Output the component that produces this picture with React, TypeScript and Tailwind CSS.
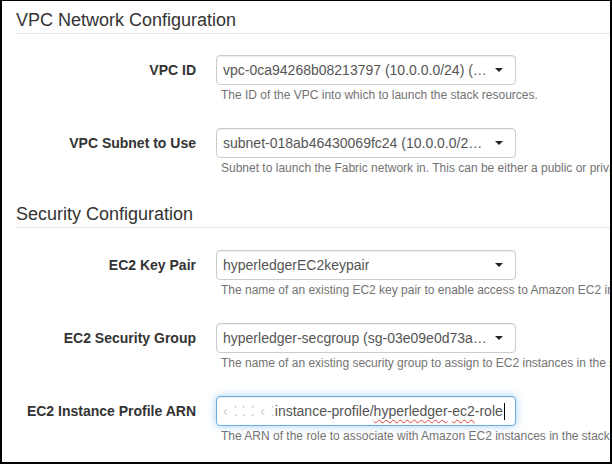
import React from "react";

function Caret() {
  return (
    <span className="w-0 h-0 border-l-[4px] border-r-[4px] border-t-[4px] border-l-transparent border-r-transparent border-t-[#222] shrink-0" />
  );
}

function Select({ value }: { value: string }) {
  return (
    <div className="w-[300px] h-[30px] flex items-center justify-between pl-[6px] pr-[12px] border border-[#ccc] rounded-[4px] bg-white shadow-[inset_0_1px_1px_rgba(0,0,0,0.075)]">
      <span className="text-[14px] leading-[20px] text-[#555] whitespace-nowrap overflow-hidden">{value}</span>
      <Caret />
    </div>
  );
}

function Row({
  label,
  help,
  children,
}: {
  label: string;
  help: string;
  children: React.ReactNode;
}) {
  return (
    <div className="flex">
      <div className="w-[180px] shrink-0 text-right text-[14px] leading-[30px] font-bold text-[#333]">
        {label}
      </div>
      <div className="ml-[20px] flex flex-col">
        {children}
        <div className="mt-[2px] text-[12px] leading-[16px] text-[#737373] whitespace-nowrap pl-[5px]">
          {help}
        </div>
      </div>
    </div>
  );
}

function Heading({ text, className }: { text: string; className?: string }) {
  return (
    <div className={"ml-[14px] border-b border-[#e5e5e5] pb-[3px] " + (className ?? "")}>
      <div className="text-[18px] leading-[20px] text-[#333]">{text}</div>
    </div>
  );
}

export default function App() {
  return (
    <div
      className="w-[612px] h-[464px] bg-white border-t border-l-2 border-r-2 border-b-2 border-black overflow-hidden flex flex-col"
      style={{ fontFamily: '"Liberation Sans", Arial, sans-serif' }}
    >
      <Heading text="VPC Network Configuration" className="pt-[9px]" />
      <div className="pl-[14px] pt-[21px] flex flex-col gap-[25px]">
        <Row label="VPC ID" help="The ID of the VPC into which to launch the stack resources.">
          <Select value="vpc-0ca94268b08213797 (10.0.0.0/24) (…" />
        </Row>
        <Row
          label="VPC Subnet to Use"
          help="Subnet to launch the Fabric network in. This can be either a public or private subnet."
        >
          <Select value="subnet-018ab46430069fc24 (10.0.0.0/2…" />
        </Row>
      </div>
      <Heading text="Security Configuration" className="mt-[28px]" />
      <div className="pl-[14px] pt-[22px] flex flex-col gap-[25px]">
        <Row
          label="EC2 Key Pair"
          help="The name of an existing EC2 key pair to enable access to Amazon EC2 instances in the stack."
        >
          <Select value="hyperledgerEC2keypair" />
        </Row>
        <Row
          label="EC2 Security Group"
          help="The name of an existing security group to assign to EC2 instances in the stack."
        >
          <Select value="hyperledger-secgroup (sg-03e09e0d73a…" />
        </Row>
        <Row
          label="EC2 Instance Profile ARN"
          help="The ARN of the role to associate with Amazon EC2 instances in the stack."
        >
          <div className="w-[300px] h-[30px] flex items-center pl-[6px] border border-[#66afe9] rounded-[4px] bg-white shadow-[inset_0_1px_1px_rgba(0,0,0,0.075),0_0_8px_rgba(102,175,233,0.6)]">
            <span className="text-[14px] leading-[20px] text-[#555] whitespace-nowrap flex items-center">
              <span className="text-[#c8c8c8] tracking-[1px]">‹ ⁚ ⁚ ⁚ ‹ ⁚</span>
              <span>instance-profile/</span>
              <span className="underline decoration-wavy decoration-[#e0403a] decoration-1 underline-offset-[3px]">hyperledger</span>
              <span>-</span>
              <span className="underline decoration-wavy decoration-[#e0403a] decoration-1 underline-offset-[3px]">ec2</span>
              <span>-role</span>
              <span className="inline-block w-[1px] h-[17px] bg-black ml-[1px]" />
            </span>
          </div>
        </Row>
      </div>
    </div>
  );
}
